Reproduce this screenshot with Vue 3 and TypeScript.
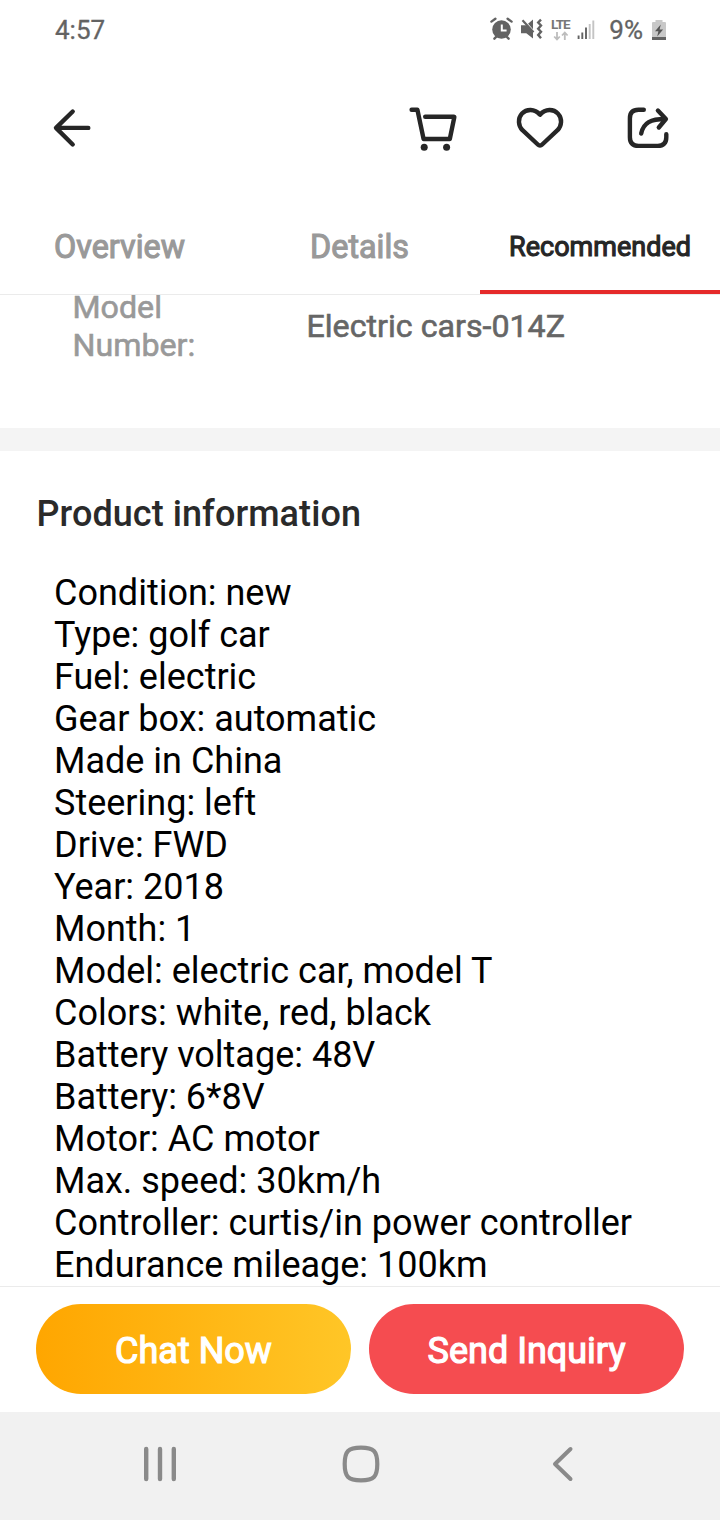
<script setup lang="ts">
interface Tab {
  label: string
  active: boolean
}

const tabs: Tab[] = [
  { label: 'Overview', active: false },
  { label: 'Details', active: false },
  { label: 'Recommended', active: true },
]

const info: string[] = [
  'Condition: new',
  'Type: golf car',
  'Fuel: electric',
  'Gear box: automatic',
  'Made in China',
  'Steering: left',
  'Drive: FWD',
  'Year: 2018',
  'Month: 1',
  'Model: electric car, model T',
  'Colors: white, red, black',
  'Battery voltage: 48V',
  'Battery: 6*8V',
  'Motor: AC motor',
  'Max. speed: 30km/h',
  'Controller: curtis/in power controller',
  'Endurance mileage: 100km',
]
</script>

<template>
  <div class="screen">
    <div class="status">
      <span class="clock">4:57</span>
      <svg class="status-icons" width="112" height="32" viewBox="488 14 112 32">
        <g fill="#636363">
          <path d="M491.400 21.600l4-2.900M511.600 21.600l-4-2.900M497 36l-2.600 2.700M506 36l2.600 2.700" stroke="#636363" stroke-width="2.400" stroke-linecap="round" />
          <circle cx="501.500" cy="29.500" r="9.300" />
          <path d="M501.800 24.500v6h4.800" fill="none" stroke="#fff" stroke-width="2" />
          <path d="M521 25.200h5.300l6.700-5.800v19.200l-6.700-5.400h-5.300z" />
          <path d="M522.500 18.500l14 16" stroke="#fff" stroke-width="1.600" />
          <path d="M522.500 20.200l11 12" stroke="#636363" stroke-width="2.200" />
          <path d="M541 19.600l-2.800 2.900 2.800 3-2.800 3.200 2.800 3-2.800 3.200 2.800 3.300" fill="none" stroke="#636363" stroke-width="2.400" />
        </g>
        <text x="551" y="28.700" class="lte" textLength="19.500">LTE</text>
        <path d="M557 32v7.300M554.200 36.500l2.800 3 2.800-3M564.800 40v-7.300M562 35.500l2.800-3 2.800 3" fill="none" stroke="#bdbdbd" stroke-width="1.800" />
        <path d="M578.600 35.500v3.500M582.300 32.500v6.500M586 27.500v11.500" stroke="#636363" stroke-width="1.900" />
        <path d="M589.700 24v15M593.300 20.500v18.500" stroke="#c4c4c4" stroke-width="1.900" />
      </svg>
      <span class="percent">9%</span>
      <svg class="battery" width="14" height="20" viewBox="0 0 14 20">
        <path d="M3.500 2V0h7v2H13q1 0 1 1v17H0V3q0-1 1-1z" fill="#c8c8c8" />
        <path d="M0 17h14v3H0z" fill="#636363" />
        <path d="M8.800 4.500L3 11.200h3.400l-1.200 5.200 5.900-7H7.600z" fill="#555" />
      </svg>
    </div>

    <header class="toolbar">
      <svg class="back" width="44" height="48" viewBox="50 104 44 48">
        <path d="M72.700 111.500L56 127.900l16.700 16.600M56.500 127.900h31.800" />
      </svg>
      <svg class="cart" width="54" height="48" viewBox="406 104 54 48">
        <path d="M411.600 109.700h5.800l6.200 29.300h26.200l4.500-21.800q.1-.5-.5-.5h-28.600" />
        <circle class="dot" cx="424.200" cy="147.200" r="3.500" />
        <circle class="dot" cx="446.600" cy="147.200" r="3.500" />
      </svg>
      <svg class="heart" width="54" height="48" viewBox="513 104 54 48">
        <path d="M540 114.700C534.500 108.500 526.500 108.800 522 113.600C517.500 118.600 518.200 125.600 522.500 130.200L537.800 144.500Q540 146.800 542.200 144.500L557.500 130.200C561.800 125.600 562.500 118.600 558 113.600C553.500 108.800 545.500 108.500 540 114.700Z" />
      </svg>
      <svg class="share" width="48" height="48" viewBox="624 104 48 48">
        <path d="M643.800 109.800h-5.300q-8.600 0-8.600 8.600v18.900q0 8.600 8.600 8.600h19.200q8.600 0 8.600-8.600V134.200" />
        <path d="M641.200 133.500C643.500 122.500 651 119 665 119M657.900 110.600l8 8.400-7.100 8.500" />
      </svg>
    </header>

    <nav class="tabs">
      <div v-for="tab in tabs" :key="tab.label" class="tab" :class="{ active: tab.active }">
        <span>{{ tab.label }}</span>
      </div>
    </nav>

    <main class="content">
      <section class="spec">
        <div class="spec-name">Model<br />Number:</div>
        <div class="spec-value">Electric cars-014Z</div>
      </section>
      <div class="divider"></div>
      <section class="product">
        <h2>Product information</h2>
        <div class="lines">
          <p v-for="line in info" :key="line">{{ line }}</p>
        </div>
      </section>
    </main>

    <footer class="actions">
      <button class="chat"><span>Chat Now</span></button>
      <button class="send"><span>Send Inquiry</span></button>
    </footer>

    <div class="navbar">
      <svg width="480" height="70" viewBox="120 1430 480 70">
        <path d="M146.200 1449v30M160 1449v30M173.800 1449v30" stroke-width="4.400" />
        <path d="M361 1447.600c12.800 0 16.300 3.600 16.300 16.400s-3.500 16.400-16.300 16.400-16.300-3.600-16.300-16.400 3.500-16.400 16.300-16.400z" stroke-width="4.200" />
        <path d="M570.500 1449L555 1464l15.500 15" stroke-width="4" />
      </svg>
    </div>
  </div>
</template>

<style>
body {
  margin: 0;
  background: #fff;
}
</style>

<style scoped>
.screen {
  width: 720px;
  height: 1520px;
  display: flex;
  flex-direction: column;
  overflow: hidden;
  background: #fff;
  font-family: Roboto, "Liberation Sans", sans-serif;
}

.status {
  height: 60px;
  flex: none;
  display: flex;
  align-items: center;
  padding: 0 54px 0 55px;
  box-sizing: border-box;
  color: #636363;
  font-size: 26px;
  -webkit-text-stroke: 0.3px currentColor;
}

.status-icons,
.battery {
  margin-bottom: 1px;
}

.clock {
  flex: 1;
}

.percent {
  margin: 0 9px 0 9px;
}

.lte {
  font-size: 13.5px;
  font-weight: 700;
  fill: #777;
  -webkit-text-stroke: 0;
}

.toolbar {
  height: 136px;
  flex: none;
  display: flex;
  align-items: center;
  padding: 0 48px 0 50px;
  box-sizing: border-box;
}

.toolbar path {
  fill: none;
  stroke: #262626;
  stroke-width: 4.4;
  stroke-linecap: round;
  stroke-linejoin: round;
}

.dot {
  fill: #262626;
}

.back {
  margin-right: auto;
}

.heart {
  margin: 0 57px 0 53px;
}

.tabs {
  height: 99px;
  flex: none;
  display: grid;
  grid-template-columns: repeat(3, 240px);
  border-bottom: 1px solid #ebebeb;
  box-sizing: border-box;
}

.tab {
  display: flex;
  align-items: center;
  justify-content: center;
  box-sizing: border-box;
  height: 98px;
  padding-top: 3px;
  padding-right: 1px;
  color: #999;
  font-size: 32.3px;
  -webkit-text-stroke: 1.1px currentColor;
}

.tab.active {
  padding-right: 0;
  color: #262626;
  font-size: 27px;
  border-bottom: 4px solid #e52a2a;
  padding-top: 7px;
}

.content {
  flex: 1;
  min-height: 0;
  overflow: hidden;
}

.spec {
  height: 133px;
  display: flex;
  font-size: 32.2px;
  line-height: 38px;
}

.spec-name {
  width: 234px;
  padding-left: 72.5px;
  margin-top: -7px;
  color: #999;
  -webkit-text-stroke: 0.6px currentColor;
}

.spec-value {
  margin-top: 12px;
  color: #666;
  -webkit-text-stroke: 0.6px currentColor;
}

.divider {
  height: 23px;
  background: #f4f4f4;
}

h2 {
  margin: 0;
  padding: 42px 0 0 36.5px;
  font-size: 36px;
  line-height: 42px;
  font-weight: 500;
  letter-spacing: 0.07px;
  color: #2a2a2a;
}

.lines {
  padding: 37px 0 0 54px;
}

.lines p {
  margin: 0;
  font-size: 36px;
  line-height: 42px;
  color: #000;
  white-space: nowrap;
}

.actions {
  height: 126px;
  flex: none;
  display: flex;
  gap: 18px;
  padding: 17px 36px 18px;
  box-sizing: border-box;
  border-top: 1px solid #ebebeb;
}

.actions button {
  flex: 1;
  height: 90px;
  padding: 4px 0 0;
  border: 0;
  border-radius: 45px;
  color: #fff;
  font: 400 36px Roboto, "Liberation Sans", sans-serif;
  -webkit-text-stroke: 1.2px currentColor;
}

.actions .chat {
  background: linear-gradient(90deg, #ffa600, #ffc627);
}

.actions .send {
  background: #f54c50;
}

.navbar {
  height: 108px;
  flex: none;
  display: flex;
  padding: 18px 120px 0;
  box-sizing: border-box;
  background: #f1f1f1;
}

.navbar path {
  fill: none;
  stroke: #8a8a8a;
  stroke-linecap: round;
  stroke-linejoin: round;
}
</style>
